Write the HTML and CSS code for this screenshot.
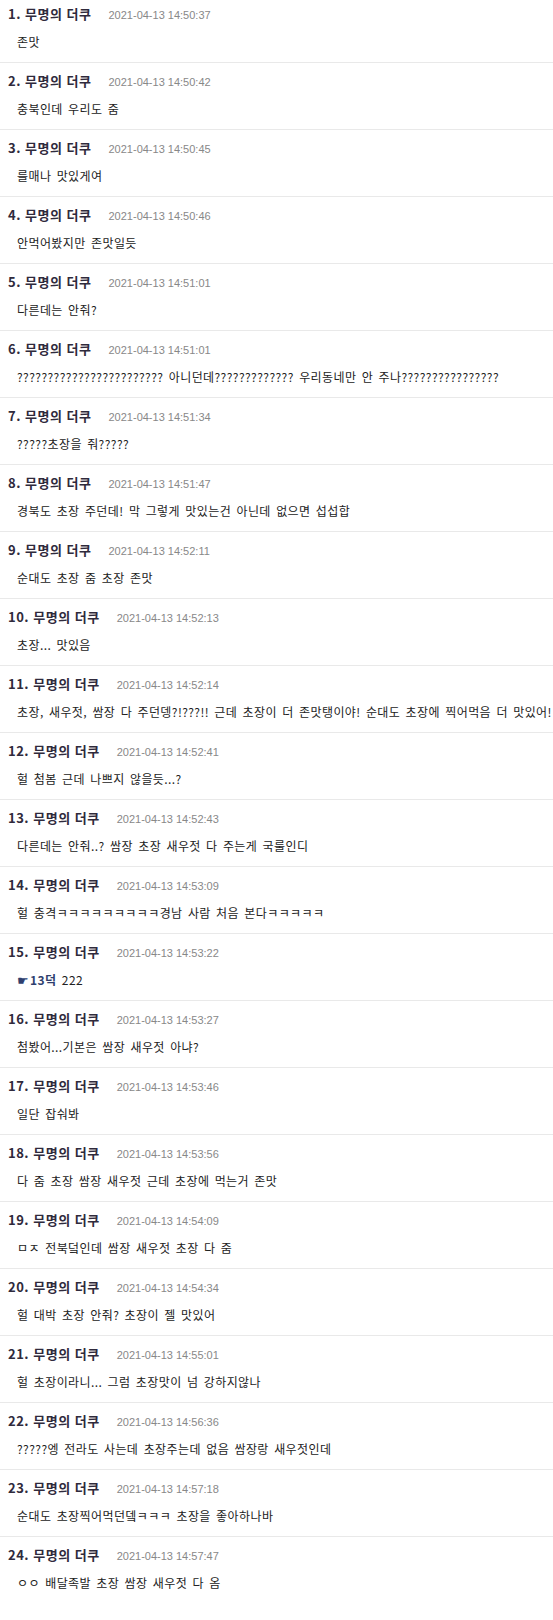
FILE: index.html
```html
<!DOCTYPE html>
<html lang="ko">
<head>
<meta charset="utf-8">
<title>댓글</title>
<link rel="stylesheet" href="styles.css">
</head>
<body>
<ul class="comments">
  <li class="comment"><div class="head"><span class="name">1. 무명의 더쿠</span><span class="date">2021-04-13 14:50:37</span></div><p class="body">존맛</p></li>
  <li class="comment"><div class="head"><span class="name">2. 무명의 더쿠</span><span class="date">2021-04-13 14:50:42</span></div><p class="body">충북인데 우리도 줌</p></li>
  <li class="comment"><div class="head"><span class="name">3. 무명의 더쿠</span><span class="date">2021-04-13 14:50:45</span></div><p class="body">를매나 맛있게여</p></li>
  <li class="comment"><div class="head"><span class="name">4. 무명의 더쿠</span><span class="date">2021-04-13 14:50:46</span></div><p class="body">안먹어봤지만 존맛일듯</p></li>
  <li class="comment"><div class="head"><span class="name">5. 무명의 더쿠</span><span class="date">2021-04-13 14:51:01</span></div><p class="body">다른데는 안줘?</p></li>
  <li class="comment"><div class="head"><span class="name">6. 무명의 더쿠</span><span class="date">2021-04-13 14:51:01</span></div><p class="body">???????????????????????? 아니던데????????????? 우리동네만 안 주나????????????????</p></li>
  <li class="comment"><div class="head"><span class="name">7. 무명의 더쿠</span><span class="date">2021-04-13 14:51:34</span></div><p class="body">?????초장을 줘?????</p></li>
  <li class="comment"><div class="head"><span class="name">8. 무명의 더쿠</span><span class="date">2021-04-13 14:51:47</span></div><p class="body">경북도 초장 주던데! 막 그렇게 맛있는건 아닌데 없으면 섭섭합</p></li>
  <li class="comment"><div class="head"><span class="name">9. 무명의 더쿠</span><span class="date">2021-04-13 14:52:11</span></div><p class="body">순대도 초장 줌 초장 존맛</p></li>
  <li class="comment"><div class="head"><span class="name">10. 무명의 더쿠</span><span class="date">2021-04-13 14:52:13</span></div><p class="body">초장... 맛있음</p></li>
  <li class="comment"><div class="head"><span class="name">11. 무명의 더쿠</span><span class="date">2021-04-13 14:52:14</span></div><p class="body">초장, 새우젓, 쌈장 다 주던뎅?!???!! 근데 초장이 더 존맛탱이야! 순대도 초장에 찍어먹음 더 맛있어!</p></li>
  <li class="comment"><div class="head"><span class="name">12. 무명의 더쿠</span><span class="date">2021-04-13 14:52:41</span></div><p class="body">헐 첨봄 근데 나쁘지 않을듯...?</p></li>
  <li class="comment"><div class="head"><span class="name">13. 무명의 더쿠</span><span class="date">2021-04-13 14:52:43</span></div><p class="body">다른데는 안줘..? 쌈장 초장 새우젓 다 주는게 국룰인디</p></li>
  <li class="comment"><div class="head"><span class="name">14. 무명의 더쿠</span><span class="date">2021-04-13 14:53:09</span></div><p class="body">헐 충격ㅋㅋㅋㅋㅋㅋㅋㅋㅋ경남 사람 처음 본다ㅋㅋㅋㅋㅋ</p></li>
  <li class="comment"><div class="head"><span class="name">15. 무명의 더쿠</span><span class="date">2021-04-13 14:53:22</span></div><p class="body"><a class="reply"><span class="hand">☛</span>13덕</a> 222</p></li>
  <li class="comment"><div class="head"><span class="name">16. 무명의 더쿠</span><span class="date">2021-04-13 14:53:27</span></div><p class="body">첨봤어...기본은 쌈장 새우젓 아냐?</p></li>
  <li class="comment"><div class="head"><span class="name">17. 무명의 더쿠</span><span class="date">2021-04-13 14:53:46</span></div><p class="body">일단 잡숴봐</p></li>
  <li class="comment"><div class="head"><span class="name">18. 무명의 더쿠</span><span class="date">2021-04-13 14:53:56</span></div><p class="body">다 줌 초장 쌈장 새우젓 근데 초장에 먹는거 존맛</p></li>
  <li class="comment"><div class="head"><span class="name">19. 무명의 더쿠</span><span class="date">2021-04-13 14:54:09</span></div><p class="body">ㅁㅈ 전북덬인데 쌈장 새우젓 초장 다 줌</p></li>
  <li class="comment"><div class="head"><span class="name">20. 무명의 더쿠</span><span class="date">2021-04-13 14:54:34</span></div><p class="body">헐 대박 초장 안줘? 초장이 젤 맛있어</p></li>
  <li class="comment"><div class="head"><span class="name">21. 무명의 더쿠</span><span class="date">2021-04-13 14:55:01</span></div><p class="body">헐 초장이라니... 그럼 초장맛이 넘 강하지않나</p></li>
  <li class="comment"><div class="head"><span class="name">22. 무명의 더쿠</span><span class="date">2021-04-13 14:56:36</span></div><p class="body">?????엥 전라도 사는데 초장주는데 없음 쌈장랑 새우젓인데</p></li>
  <li class="comment"><div class="head"><span class="name">23. 무명의 더쿠</span><span class="date">2021-04-13 14:57:18</span></div><p class="body">순대도 초장찍어먹던뎈ㅋㅋㅋ 초장을 좋아하나바</p></li>
  <li class="comment"><div class="head"><span class="name">24. 무명의 더쿠</span><span class="date">2021-04-13 14:57:47</span></div><p class="body">ㅇㅇ 배달족발 초장 쌈장 새우젓 다 옴</p></li>
</ul>
</body>
</html>
```

FILE: styles.css
```css
html, body {
  margin: 0;
  padding: 0;
  background: #ffffff;
}

body {
  font-family: "Noto Sans CJK KR", "Noto Sans", sans-serif;
  color: #333333;
  width: 553px;
  overflow: hidden;
}

.comments {
  list-style: none;
  margin: 0;
  padding: 0;
}

.comment {
  padding: 8px 0 10px 0;
  border-bottom: 1px solid #e9e9e9;
}

.comment:first-child {
  padding-top: 4px;
}

.comment:last-child {
  border-bottom: none;
}

.head {
  display: flex;
  align-items: baseline;
  padding-left: 8px;
  height: 20px;
  line-height: 20px;
  white-space: nowrap;
}

.name {
  font-size: 13px;
  font-weight: 700;
  letter-spacing: 0.5px;
  color: #2f2a3c;
}

.date {
  margin-left: 17px;
  font-family: "Liberation Sans", Arial, sans-serif;
  font-size: 11px;
  color: #888888;
}

.body {
  margin: 8px 0 0 0;
  padding-left: 17px;
  height: 20px;
  line-height: 20px;
  font-size: 12px;
  letter-spacing: 0.4px;
  word-spacing: 1.6px;
  color: #222222;
  white-space: nowrap;
  overflow: hidden;
}

.reply {
  font-weight: 700;
  color: #2f3f6e;
  text-decoration: none;
}

.hand {
  font-family: "DejaVu Sans", sans-serif;
  font-size: 13px;
  font-weight: 400;
  margin-right: 1px;
}
```
